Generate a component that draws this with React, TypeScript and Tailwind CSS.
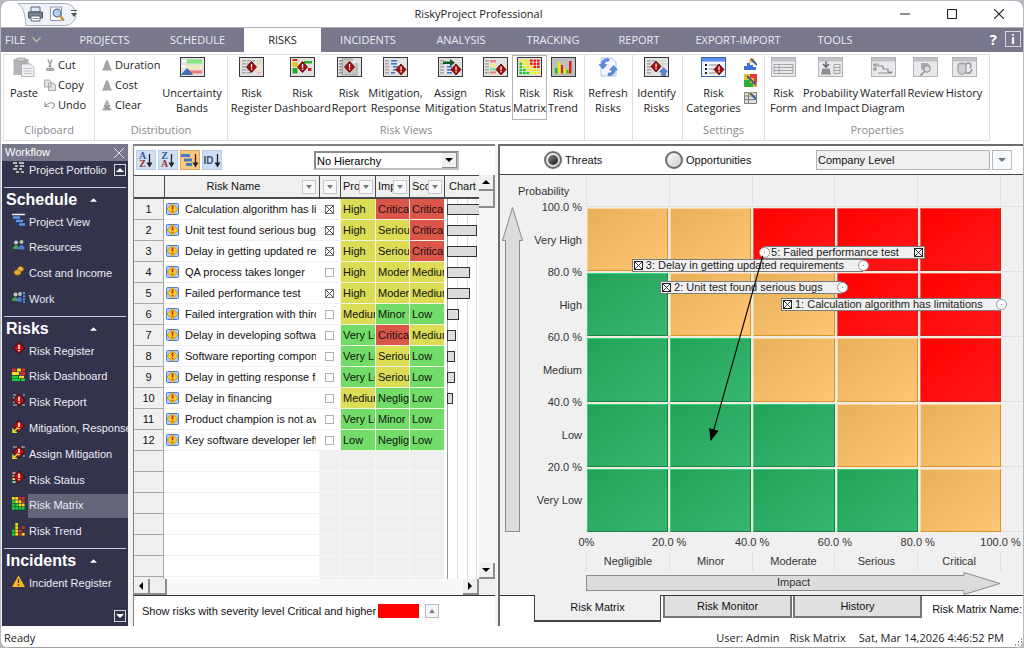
import { useState } from 'react';
import type { ReactNode } from 'react';
import clsx from 'clsx';

const uiFont = "font-['Open_Sans','Noto_Sans',sans-serif]";
const bodyFont = "font-['Liberation_Sans',Arial,sans-serif]";

type Level = 'low' | 'mid' | 'high';

const levelBg: Record<Level, string> = {
    low: 'bg-[#72dc68]',
    mid: 'bg-[#dcdc55]',
    high: 'bg-[#dc5549]',
};

const menuTabs = [
    { label: 'PROJECTS', width: 'w-[93px]' },
    { label: 'SCHEDULE', width: 'w-[93px]' },
    { label: 'RISKS', width: 'w-[77px]' },
    { label: 'INCIDENTS', width: 'w-[94px]' },
    { label: 'ANALYSIS', width: 'w-[92px]' },
    { label: 'TRACKING', width: 'w-[92px]' },
    { label: 'REPORT', width: 'w-[80px]' },
    { label: 'EXPORT-IMPORT', width: 'w-[118px]' },
    { label: 'TOOLS', width: 'w-[76px]' },
];

const risks: { name: string; open: boolean; prob: [string, Level]; impact: [string, Level]; score: [string, Level]; bar: number }[] = [
    { name: 'Calculation algorithm has limitations', open: true, prob: ['High', 'mid'], impact: ['Critical', 'high'], score: ['Critical', 'high'], bar: 36 },
    { name: 'Unit test found serious bugs', open: true, prob: ['High', 'mid'], impact: ['Serious', 'mid'], score: ['Critical', 'high'], bar: 30 },
    { name: 'Delay in getting updated requirements', open: true, prob: ['High', 'mid'], impact: ['Serious', 'mid'], score: ['Critical', 'high'], bar: 30 },
    { name: 'QA process takes longer', open: false, prob: ['High', 'mid'], impact: ['Moderate', 'mid'], score: ['Medium', 'mid'], bar: 23 },
    { name: 'Failed performance test', open: true, prob: ['High', 'mid'], impact: ['Moderate', 'mid'], score: ['Medium', 'mid'], bar: 23 },
    { name: 'Failed intergration with third', open: false, prob: ['Medium', 'mid'], impact: ['Minor', 'low'], score: ['Low', 'low'], bar: 12 },
    { name: 'Delay in developing software', open: false, prob: ['Very Low', 'low'], impact: ['Critical', 'high'], score: ['Medium', 'mid'], bar: 9 },
    { name: 'Software reporting component', open: false, prob: ['Very Low', 'low'], impact: ['Serious', 'mid'], score: ['Low', 'low'], bar: 8 },
    { name: 'Delay in getting response from', open: false, prob: ['Very Low', 'low'], impact: ['Serious', 'mid'], score: ['Low', 'low'], bar: 8 },
    { name: 'Delay in financing', open: false, prob: ['Medium', 'mid'], impact: ['Negligible', 'low'], score: ['Low', 'low'], bar: 6 },
    { name: 'Product champion is not available', open: false, prob: ['Very Low', 'low'], impact: ['Minor', 'low'], score: ['Low', 'low'], bar: 0 },
    { name: 'Key software developer left a', open: false, prob: ['Low', 'low'], impact: ['Negligible', 'low'], score: ['Low', 'low'], bar: 0 },
];

// one string per probability band, top to bottom: g = green, o = orange, r = red
const matrixRows = ['oorrr', 'goorr', 'ggoor', 'gggoo', 'ggggo'];

const matrixBg: Record<string, string> = {
    g: 'bg-linear-to-br from-[#22a258] to-[#37b671] border-t-[#2fd57c] border-l-[#2fd57c] border-r-[#1d7f48] border-b-[#1d7f48]',
    o: 'bg-linear-to-br from-[#e9b05a] to-[#ffc774] border-t-[#f8d7a4] border-l-[#f8d7a4] border-r-[#d6942f] border-b-[#d6942f]',
    r: 'bg-linear-to-br from-[#ff0000] to-[#ff1616] border-t-[#ff5a50] border-l-[#ff5a50] border-r-[#cc2020] border-b-[#cc2020]',
};

const probabilityScale = ['100.0 %', 'Very High', '80.0 %', 'High', '60.0 %', 'Medium', '40.0 %', 'Low', '20.0 %', 'Very Low', ''];
const impactTicks = ['0%', '20.0 %', '40.0 %', '60.0 %', '80.0 %', '100.0 %'];
const impactNames = ['Negligible', 'Minor', 'Moderate', 'Serious', 'Critical'];

const pins = [
    { label: '1: Calculation algorithm has limitations', impact: 100, prob: 70, width: 'w-[220px]', flip: false },
    { label: '2: Unit test found serious bugs', impact: 61.7, prob: 75, width: 'w-[182px]', flip: false },
    { label: '3: Delay in getting updated requirements', impact: 66.7, prob: 82, width: 'w-[231px]', flip: false },
    { label: '5: Failed performance test', impact: 42.9, prob: 86, width: 'w-[161px]', flip: true },
];

/* ---------- icons ---------- */

function Diamond({ x, y }: { x: number; y: number }) {
    return (
        <g transform={`translate(${x} ${y})`}>
            <path d="M0-5.500 5 0 0 5.500-5 0Z" fill="#a80b0b" stroke="#4a0505" strokeWidth="0.8" />
            <rect x="-0.6" y="-3" width="1.3" height="3.8" fill="#fff" />
            <rect x="-0.6" y="1.6" width="1.3" height="1.3" fill="#fff" />
        </g>
    );
}

function Lines({ x, w, fill = '#aaa', ys = [3, 6, 9, 12, 15] }: { x: number; w: number; fill?: string; ys?: number[] }) {
    return <>{ys.map(y => <rect key={y} x={x} y={y} width={w} height="1.6" fill={fill} />)}</>;
}

const ribbonArt: Record<string, ReactNode> = {
    bands: (
        <>
            <path d="M2 4h4M2 9.500h4" stroke="#fff" strokeWidth="2" />
            <rect x="7" y="2.500" width="15" height="4" fill="#7fe77f" />
            <rect x="7" y="8.500" width="15" height="3" fill="#f3efb0" />
            <rect x="7" y="13.500" width="15" height="3" fill="#f07878" />
            <path d="M1.500 17.500 7 11.500 12.500 17.500Z" fill="#3c6fc4" stroke="#24508f" strokeWidth="0.6" />
        </>
    ),
    register: (
        <>
            <Lines x={3} w={4} /><Lines x={8} w={4} /><Lines x={13} w={3} ys={[3]} /><Lines x={18} w={4} fill="#c6e2b2" ys={[3, 6]} />
            <Lines x={18} w={4} fill="#f0e8a0" ys={[9, 12]} /><Lines x={18} w={4} fill="#f2b8b8" ys={[15]} />
            <Diamond x={12.5} y={10} />
        </>
    ),
    dashboard: (
        <>
            <rect x="2.500" y="2" width="5" height="2" fill="#e02020" /><rect x="2.500" y="5" width="5" height="5" fill="#f0c020" />
            <rect x="2.500" y="11" width="5" height="5.500" fill="#28a828" /><rect x="14" y="4" width="8" height="2.500" fill="#28b028" />
            <rect x="18" y="11" width="3.500" height="3" fill="#e02020" />
            <Diamond x={12.5} y={10} />
        </>
    ),
    report: (
        <>
            <path d="M5 2h11l4 4v12H5Z" fill="#c8c8c8" stroke="#888" strokeWidth="0.7" />
            <path d="M16 2v4h4Z" fill="#fff" />
            <Lines x={2} w={4} fill="#999" />
            <Diamond x={12.5} y={10} />
        </>
    ),
    response: (
        <>
            <Lines x={2} w={4} /><Lines x={8} w={6} fill="#4878d0" ys={[3, 6]} /><Lines x={10} w={5} fill="#4878d0" ys={[9, 12]} /><Lines x={8} w={4} fill="#4878d0" ys={[15]} />
            <Diamond x={18} y={12.5} />
        </>
    ),
    assign: (
        <>
            <Lines x={2} w={4} /><Lines x={9} w={5} fill="#4878d0" ys={[9, 12, 15]} />
            <path d="M5 4.500h7V2l5 3.800-5 3.800V7H5Z" fill="#0f5c22" />
            <Diamond x={18} y={12.5} />
        </>
    ),
    status: (
        <>
            <Lines x={2} w={4} /><rect x="7" y="3" width="6" height="2.500" fill="#f08080" /><rect x="7" y="7" width="6" height="2.500" fill="#f2eb8c" />
            <rect x="7" y="11" width="6" height="2.500" fill="#8ce08c" /><rect x="7" y="14.500" width="6" height="2" fill="#f08080" />
            <Diamond x={18} y={12.5} />
        </>
    ),
    matrix: (
        <>
            {['yyyrrr', 'gyyrrr', 'gyyyrr', 'ggyyyy', 'gggyyy'].map((row, r) => row.split('').map((c, i) => (
                <rect key={`${r}${i}`} x={2.5 + i * 3.5} y={2.5 + r * 3.1} width="2.600" height="2.300" fill={c === 'r' ? '#f01010' : c === 'y' ? '#f6ee10' : '#18c828'} />
            )))}
        </>
    ),
    trend: (
        <>
            <rect x="4" y="11" width="2.500" height="5.500" fill="#18b828" /><rect x="7" y="5" width="2.500" height="11.500" fill="#f2e810" />
            <rect x="10" y="8" width="2" height="8.500" fill="#e02020" /><rect x="13" y="12" width="2.500" height="4.500" fill="#f2e810" />
            <rect x="15.500" y="13" width="2" height="3.500" fill="#18b828" /><rect x="18" y="4" width="2.500" height="12.500" fill="#e02020" />
        </>
    ),
    identify: (
        <>
            <Lines x={3} w={4} /><Lines x={8} w={3} ys={[3]} /><Lines x={16} w={5} fill="#c6e2b2" ys={[3, 6]} />
            <Diamond x={12} y={9.5} />
            <path d="M19.500 10.500 23.500 15h-2v3.500h-4V15h-2Z" fill="#5a88dc" stroke="#2f57a8" strokeWidth="0.5" />
        </>
    ),
};

const grayArt: Record<string, ReactNode> = {
    form: <path d="M3 7.500h19v9H3ZM3 10.500h19M3 13.500h19M8 7.500v9" stroke="#a4a4a8" fill="none" />,
    probability: (
        <>
            <path d="M8 4.500v4M5 7l3 3 3-3" stroke="#66666b" strokeWidth="1.600" fill="none" />
            <path d="M4 11.500h8v2l1 4H3l1-4Z" fill="#8d8d92" />
            <path d="M16 7.500h6v9h-6ZM16 10.500h6M16 13.500h6" stroke="#a4a4a8" fill="none" />
        </>
    ),
    waterfall: <path d="M3 7h2v2H3ZM3 11h2v2H3ZM7 6.500V9h5v3h5v3h4.500M7 16h14" stroke="#8d8d92" strokeWidth="1.200" fill="none" />,
    review: (
        <>
            <path d="M8 6h7l3 4-4 6-6-4Z" fill="#a8a8ad" />
            <circle cx="14" cy="12" r="3.200" fill="#dedee2" stroke="#8d8d92" /><path d="m11.500 14.500-4 4" stroke="#8d8d92" strokeWidth="1.600" />
        </>
    ),
    history: (
        <>
            <ellipse cx="10" cy="8" rx="4" ry="2" fill="#b8b8bd" stroke="#909095" /><path d="M6 8v7c0 3 8 3 8 0V8" fill="#cfcfd3" stroke="#909095" />
            <path d="M14 7c4-3 6 1 4 4M20 12c-1 5-5 5-7 3" stroke="#98989d" strokeWidth="1.600" fill="none" />
        </>
    ),
};

function RibbonIcon({ name }: { name: string }) {
    if (name === 'paste') {
        return (
            <svg width="24" height="20" viewBox="0 0 24 20" aria-hidden="true">
                <path d="M1.500 2h15v16h-15Z" fill="#b4b4b8" /><path d="M5 1h8v3H5Z" fill="#d2d2d5" stroke="#9a9a9e" strokeWidth="0.7" />
                <path d="M9.500 7h9l3.500 3.500V19.500h-12.500Z" fill="#f1f1f3" stroke="#a9a9ad" strokeWidth="0.8" />
                <path d="M11.500 11.500h8M11.500 14h8M11.500 16.500h8" stroke="#c0c0c4" />
            </svg>
        );
    }
    if (name === 'refresh') {
        return (
            <svg width="24" height="20" viewBox="0 0 24 20" aria-hidden="true">
                <path d="M5 1h11l4 4v14H5Z" fill="#f5f9ff" stroke="#9db6dc" strokeWidth="0.8" />
                <path d="M13 2C8 1 5 4 5.500 7.500H3l4 4.500 4-4.500H8.500C8.500 5 10 4 13 4Z" fill="#5b8fe0" stroke="#2f62b8" strokeWidth="0.500" />
                <path d="M12 18.500c5 .5 7.500-2.500 7-5.500h2.500l-4-4.500-4 4.500H16c0 2-1 3.300-4 3.300Z" fill="#5b8fe0" stroke="#2f62b8" strokeWidth="0.500" />
            </svg>
        );
    }
    if (name === 'categories' || grayArt[name]) {
        const blue = name === 'categories';
        return (
            <svg width="25" height="20" viewBox="0 0 25 20" aria-hidden="true">
                <rect x="0.500" y="0.500" width="24" height="19" fill={blue ? '#f2f5fb' : '#e9e9ec'} stroke={blue ? '#3c64a8' : '#b4b4b8'} />
                <rect x="1" y="1" width="23" height="3.500" fill={blue ? '#5a8fee' : '#c2c2c6'} />
                {blue ? (
                    <>
                        <path d="M4 7h2v2H4ZM4 11h2v2H4ZM4 15h2v2H4Z" fill="#222" /><path d="M8 8h9M8 12h5M8 16h7" stroke="#888" />
                        <Diamond x={18} y={12.5} />
                    </>
                ) : grayArt[name]}
            </svg>
        );
    }
    return (
        <svg width="25" height="20" viewBox="0 0 25 20" aria-hidden="true">
            <rect x="0.500" y="0.500" width="24" height="19" fill={name === 'trend' ? '#c0c0c0' : '#e2e2e2'} stroke="#3a3a3a" />
            {ribbonArt[name]}
        </svg>
    );
}

function SmallIcon({ name }: { name: string }) {
    const bell = 'M0.500 11.500C3 10.500 4 1 6 1s3 9.500 5.500 10.500Z';
    const art: Record<string, ReactNode> = {
        cut: <path d="M4 0.500 7 8M8 0.500 5 8M3 9.500a1.500 1.500 0 1 0 2.500 0ZM6.500 9.500a1.500 1.500 0 1 0 2.500 0Z" stroke="#9a9a9e" strokeWidth="1.400" fill="none" />,
        copy: <path d="M0.500 1h5l1.500 1.500V8h-6.500ZM4.500 4h5l2 2v5.500h-7Z" fill="#e4e4e7" stroke="#a0a0a4" strokeWidth="0.900" />,
        undo: <path d="M1 3v4.500h4.500M1.500 7C5 2.500 10.500 3 10.500 6c0 2-1 3-3 3.500" fill="none" stroke="#9a9a9e" strokeWidth="1.100" />,
        duration: <path d={bell} fill="#a3a3a8" />,
        cost: <path d={bell} fill="#a3a3a8" />,
        clear: <><path d={bell} fill="#b4b4b8" /><path d="m3.500 6 5 5m0-5-5 5" stroke="#77777c" /></>,
    };
    return <svg width="12" height="12" viewBox="0 0 12 12" className="shrink-0" aria-hidden="true">{art[name]}</svg>;
}

function NavIcon({ name }: { name: string }) {
    const diamond = (
        <g transform="translate(7 6)">
            <path d="M0-6 5.500 0 0 6-5.500 0Z" fill="#c01010" stroke="#000" strokeWidth="0.600" />
            <path d="M0-3.200V1M0 2v1.300" stroke="#fff" strokeWidth="1.500" />
        </g>
    );
    const arrow = <path d="M6 7.500 1.500 12M1 8.500V12.500h4" stroke="#f2e020" strokeWidth="1.500" fill="none" />;
    const squares = (rows: string[]) => rows.map((row, r) => row.split('').map((c, i) => c !== '.' && (
        <rect key={`${r}${i}`} x={i * 3.3} y={r * 3.3} width="2.700" height="2.700" fill={c === 'r' ? '#e02828' : c === 'y' ? '#f2e010' : '#10d828'} />
    )));
    const art: Record<string, ReactNode> = {
        portfolio: <path d="M1 1h4M7 1h5M3 4h3M8 4h4M1 7h4M7 7h3M4 10h3M9 10h3" stroke="#b8b8b8" strokeWidth="1.800" />,
        project: <><path d="M0 1.500h13" stroke="#f0f0f0" strokeWidth="1.600" /><path d="M1 4.500h7M4 8h7M7 11.500h6" stroke="#5a94f0" strokeWidth="2.600" /></>,
        resources: <><circle cx="4" cy="3.500" r="2" fill="#c8c8c8" /><circle cx="9.500" cy="3" r="2" fill="#b0c4a8" /><path d="M1 10c0-5 6-5 6 0Z" fill="#3fa848" /><path d="M6.500 10.500c0-6 6-6 6 0Z" fill="#4a7ce0" /></>,
        cost: <><ellipse cx="8.500" cy="4" rx="3" ry="2.500" fill="#f0b840" stroke="#8a5c10" strokeWidth="0.600" /><ellipse cx="5.500" cy="7.500" rx="3.500" ry="2.700" fill="#e8a828" stroke="#8a5c10" strokeWidth="0.600" /></>,
        work: <><circle cx="3.500" cy="3.500" r="2" fill="#c8c8c8" /><circle cx="8" cy="3" r="2" fill="#b0c4a8" /><path d="M0 10c0-5 6-5 6 0Z" fill="#3fa848" /><path d="M5 10.500c0-6 5-6 5 0Z" fill="#4a7ce0" /><path d="M12 1v11" stroke="#5a94f0" strokeWidth="2" strokeDasharray="2 1.200" /></>,
        register: <>{diamond}</>,
        dashboard: <><path d="M0 2h4" stroke="#e02828" strokeWidth="3" /><path d="M5 2h4" stroke="#f2e010" strokeWidth="3" /><path d="M10 2h3M8 5.500h5" stroke="#e02828" strokeWidth="3" /><path d="M0 5.500h7" stroke="#f2e010" strokeWidth="3" /><path d="M0 9h6M0 12h8M9 12h4" stroke="#10d828" strokeWidth="2.400" /><path d="M7 9h5" stroke="#f2e010" strokeWidth="2.400" /></>,
        report: <><path d="M1 1h3M1 4h2M1 8h2M11 1h2M1 11h4M10 11h3" stroke="#9a9a9a" strokeWidth="1.500" />{diamond}</>,
        mitigation: <>{diamond}{arrow}</>,
        assign: <><path d="M1 1h4M9 1h4M11 10h2" stroke="#9a9a9a" strokeWidth="1.500" />{diamond}{arrow}</>,
        status: <><path d="M0.500 2h3" stroke="#f08080" strokeWidth="2" /><path d="M0.500 5h3M0.500 11h3" stroke="#8ce08c" strokeWidth="2" /><path d="M0.500 8h3" stroke="#f2eb8c" strokeWidth="2" />{diamond}</>,
        matrix: squares(['yyrr', 'gyyr', 'ggyy', 'gggg']),
        trend: squares(['.y..', '.y.r', 'gyr.', 'gyry']),
        incident: <><path d="M6.500 0.500 13 12H0Z" fill="#f6b81c" /><path d="M6.500 4v4M6.500 9.300v1.500" stroke="#4a3606" strokeWidth="1.400" /></>,
    };
    return <svg width="13" height="13" viewBox="0 0 13 13" className="mb-1 shrink-0" aria-hidden="true">{art[name]}</svg>;
}

function Triangle({ dir, className = 'fill-black' }: { dir: 'up' | 'down' | 'left' | 'right'; className?: string }) {
    const d = { up: 'M0 6 4 2l4 4Z', down: 'M0 2l4 4 4-4Z', left: 'M6 0 2 4l4 4Z', right: 'M2 0l4 4-4 4Z' };
    return <svg width="8" height="8" viewBox="0 0 8 8" className={className} aria-hidden="true"><path d={d[dir]} /></svg>;
}

function RiskRowIcon() {
    return (
        <svg width="13" height="12" viewBox="0 0 13 12" className="shrink-0" aria-hidden="true">
            <rect x="0.500" y="0.500" width="12" height="11" rx="1" fill="#b4cbf2" stroke="#4f7cc8" />
            <path d="M6.500 0.500 12 6 6.500 11.500 1 6Z" fill="#f8cc28" stroke="#c08810" strokeWidth="0.700" />
            <path d="M6.500 2.500v4M6.500 7.700v1.600" stroke="#d02010" strokeWidth="1.700" />
        </svg>
    );
}

/* ---------- shared controls ---------- */

function CrossBox({ label, checked, dark }: { label: string; checked: boolean; dark?: boolean }) {
    return (
        <span className="relative block size-[9px] shrink-0">
            <input
                type="checkbox"
                aria-label={label}
                defaultChecked={checked}
                className={clsx('peer block size-[9px] appearance-none border bg-white', dark ? 'border-[#222]' : 'border-[#b0b0b0] checked:border-[#777]')}
            />
            <svg viewBox="0 0 9 9" className="pointer-events-none absolute inset-0 hidden peer-checked:block" aria-hidden="true">
                <path d="m1 1 7 7m0-7-7 7" stroke={dark ? '#222' : '#333'} strokeWidth="0.900" />
            </svg>
        </span>
    );
}

function ScrollButton({ dir, label }: { dir: 'up' | 'down' | 'left' | 'right'; label: string }) {
    return (
        <button aria-label={label} className="flex size-4 shrink-0 items-center justify-center border-r-2 border-b-2 border-[#8c8c8c] bg-[#f0f0f0]">
            <Triangle dir={dir} />
        </button>
    );
}

/* ---------- window chrome ---------- */

function TitleBar() {
    return (
        <header className="flex h-[26px] shrink-0 items-center">
            <div className="relative ml-4 flex h-full w-16 items-center gap-[6px] pl-[10px]">
                <svg width="60" height="23" viewBox="0 0 60 23" className="absolute top-[2px] left-0" aria-hidden="true">
                    <path d="M1 0.500h47a11 11 0 0 1 0 22H9C8 12 7 5 1 0.500Z" fill="#eff2f8" stroke="#a9afbb" />
                </svg>
                <button aria-label="Print" className="relative">
                    <svg width="17" height="16" viewBox="0 0 17 16" aria-hidden="true">
                        <path d="M4 1h9v5H4Z" fill="#dfe8f5" stroke="#5a6478" /><path d="M1.500 6h14v6h-14Z" fill="#7c8290" stroke="#4a4f5c" />
                        <path d="M4 10h9v5H4Z" fill="#fff" stroke="#5a6478" /><path d="M5.500 12.500h6" stroke="#88a" />
                    </svg>
                </button>
                <button aria-label="Print preview" className="relative">
                    <svg width="15" height="16" viewBox="0 0 15 16" aria-hidden="true">
                        <path d="M0.500 1h11v13.500H.5Z" fill="#fff" stroke="#8a98b0" />
                        <circle cx="7" cy="7" r="3.800" fill="#b4d2f2" stroke="#5a7090" strokeWidth="1.200" /><path d="m10 10 4 4.500" stroke="#d08a28" strokeWidth="2.200" />
                    </svg>
                </button>
                <button aria-label="Customize toolbar" className="absolute top-[9px] right-1">
                    <svg width="6" height="8" viewBox="0 0 6 8" aria-hidden="true"><path d="M0 .5h6" stroke="#555" /><path d="M0 3h6L3 7Z" fill="#555" /></svg>
                </button>
            </div>
            <h1 className="flex-1 text-center text-[11px] text-[#222]">RiskyProject Professional</h1>
            <div className="flex h-full w-[147px] items-center justify-end gap-[37px] pr-[19px] text-[#222]">
                <button aria-label="Minimize"><svg width="10" height="10" viewBox="0 0 10 10"><path d="M0 5h10" stroke="currentColor" /></svg></button>
                <button aria-label="Maximize"><svg width="10" height="10" viewBox="0 0 10 10"><rect x="0.500" y="0.500" width="9" height="9" rx="1" fill="none" stroke="currentColor" strokeWidth="1.200" /></svg></button>
                <button aria-label="Close"><svg width="10" height="10" viewBox="0 0 10 10"><path d="m0 0 10 10M10 0 0 10" stroke="currentColor" strokeWidth="1.200" /></svg></button>
            </div>
        </header>
    );
}

function MenuBar() {
    const [active, setActive] = useState('RISKS');
    return (
        <nav className="flex h-6 shrink-0 items-stretch bg-[#78778b] text-[11px] text-[#ececf2]">
            <button className="flex w-[57px] items-center gap-[6px] pl-1">
                FILE
                <svg width="9" height="6" viewBox="0 0 9 6" aria-hidden="true"><path d="m.5.5 4 4 4-4" fill="none" stroke="#b9c3a6" strokeWidth="1.400" /></svg>
            </button>
            {menuTabs.map(tab => (
                <button
                    key={tab.label}
                    onClick={() => setActive(tab.label)}
                    className={clsx('text-center whitespace-nowrap', tab.width, active === tab.label && 'bg-white text-[#222]')}
                >
                    {tab.label}
                </button>
            ))}
            <div className="ml-auto flex items-center gap-2 pr-[2px] pb-[2px] font-bold text-white">
                <button aria-label="Help" className="text-[15px] leading-none">?</button>
                <button aria-label="About" className="size-4 border border-[#d6d6de] text-[13px] leading-[13px]">i</button>
            </div>
        </nav>
    );
}

function RibbonButton({ icon, lines, width, active }: { icon: string; lines: string[]; width: string; active?: boolean }) {
    return (
        <button
            className={clsx(
                'flex h-[65px] shrink-0 flex-col items-center border pt-px text-[11px] leading-[15px] whitespace-nowrap text-[#222]',
                width,
                active ? 'border-[#b4b4b4]' : 'border-transparent',
            )}
        >
            <span className="mb-2 block h-5"><RibbonIcon name={icon} /></span>
            {lines.map(line => <span key={line}>{line}</span>)}
        </button>
    );
}

function SmallButton({ icon, label }: { icon: string; label: string }) {
    return (
        <button className="flex h-5 items-center gap-[2px] text-[11px] text-[#222]">
            <SmallIcon name={icon} />
            {label}
        </button>
    );
}

function RibbonGroup({ title, children, width }: { title?: string; children: ReactNode; width: string }) {
    return (
        <section className={clsx('flex shrink-0 flex-col border-r border-[#e0e0e2]', width)}>
            <div className="flex flex-1">{children}</div>
            <h2 className="h-[18px] text-center text-[11px] leading-4 text-[#8a8a8e]">{title}</h2>
        </section>
    );
}

function Ribbon() {
    return (
        <div className="h-[92px] shrink-0 overflow-hidden pt-[2px] pl-[2px]">
            <div className="flex h-[87px] w-max border-y border-l border-[#e0e0e2]">
                <RibbonGroup title="Clipboard" width="w-[91px]">
                    <RibbonButton icon="paste" lines={['Paste']} width="w-[40px]" />
                    <div className="flex flex-col">
                        <SmallButton icon="cut" label="Cut" />
                        <SmallButton icon="copy" label="Copy" />
                        <SmallButton icon="undo" label="Undo" />
                    </div>
                </RibbonGroup>
                <RibbonGroup title="Distribution" width="w-[133px]">
                    <div className="flex w-[62px] flex-col pl-[6px]">
                        <SmallButton icon="duration" label="Duration" />
                        <SmallButton icon="cost" label="Cost" />
                        <SmallButton icon="clear" label="Clear" />
                    </div>
                    <RibbonButton icon="bands" lines={['Uncertainty', 'Bands']} width="w-[70px]" />
                </RibbonGroup>
                <RibbonGroup title="Risk Views" width="w-[357px]">
                    <RibbonButton icon="register" lines={['Risk', 'Register']} width="w-[47px]" />
                    <RibbonButton icon="dashboard" lines={['Risk', 'Dashboard']} width="w-[55px]" />
                    <RibbonButton icon="report" lines={['Risk', 'Report']} width="w-[38px]" />
                    <RibbonButton icon="response" lines={['Mitigation,', 'Response']} width="w-[55px]" />
                    <RibbonButton icon="assign" lines={['Assign', 'Mitigation']} width="w-[55px]" />
                    <RibbonButton icon="status" lines={['Risk', 'Status']} width="w-[34px]" />
                    <RibbonButton icon="matrix" lines={['Risk', 'Matrix']} width="w-[35px]" active />
                    <RibbonButton icon="trend" lines={['Risk', 'Trend']} width="w-[32px]" />
                </RibbonGroup>
                <RibbonGroup width="w-[48px]">
                    <RibbonButton icon="refresh" lines={['Refresh', 'Risks']} width="w-[46px]" />
                </RibbonGroup>
                <RibbonGroup width="w-[50px]">
                    <RibbonButton icon="identify" lines={['Identify', 'Risks']} width="w-[47px]" />
                </RibbonGroup>
                <RibbonGroup title="Settings" width="w-[82px]">
                    <RibbonButton icon="categories" lines={['Risk', 'Categories']} width="w-[61px]" />
                    <div className="flex flex-col gap-1 pt-[2px]">
                        <button aria-label="Chart settings">
                            <svg width="13" height="13" viewBox="0 0 13 13"><path d="M0 9h3v4H0ZM3 6h3v7H3ZM6 8h3v5H6ZM9 10h3v3H9Z" fill="#3c72d8" /><circle cx="8" cy="3.500" r="2.800" fill="#f2c84a" /><path d="m7 2 6 6" stroke="#3858a0" strokeWidth="1.800" /></svg>
                        </button>
                        <button aria-label="Matrix settings">
                            <svg width="13" height="13" viewBox="0 0 13 13"><path d="M0 0h13v13H0Z" fill="#e8c030" /><path d="M0 6h6v7H0ZM6 9h3v4H6Z" fill="#2fae3c" /><path d="M6 0h7v9h-3V4H6Z" fill="#e04030" /><path d="m3 2 9 9" stroke="#3858a0" strokeWidth="1.800" /></svg>
                        </button>
                        <button aria-label="Table settings">
                            <svg width="13" height="13" viewBox="0 0 13 13"><path d="M.5 1.500h12v11H.5ZM.5 5h12M.5 8.500h12M4.500 1.500v11" fill="#dcdcdc" stroke="#808080" /><circle cx="7" cy="3" r="2.400" fill="#f2c84a" /><path d="m6 2 6 6" stroke="#3858a0" strokeWidth="1.800" /></svg>
                        </button>
                    </div>
                </RibbonGroup>
                <RibbonGroup title="Properties" width="w-[225px]">
                    <RibbonButton icon="form" lines={['Risk', 'Form']} width="w-[37px]" />
                    <RibbonButton icon="probability" lines={['Probability', 'and Impact']} width="w-[57px]" />
                    <RibbonButton icon="waterfall" lines={['Waterfall', 'Diagram']} width="w-[48px]" />
                    <RibbonButton icon="review" lines={['Review']} width="w-[37px]" />
                    <RibbonButton icon="history" lines={['History']} width="w-[40px]" />
                </RibbonGroup>
            </div>
        </div>
    );
}

/* ---------- workflow pane ---------- */

function NavHeading({ label }: { label: string }) {
    return (
        <h3 className="mx-[2px] mt-1 flex h-[22px] shrink-0 items-center border-t border-[#c9c9d6] pt-[2px] pl-[2px] text-[16px] leading-5 font-bold text-white">
            <span className="w-[84px]">{label}</span>
            <Triangle dir="up" className="w-[7px] fill-white" />
        </h3>
    );
}

function NavItem({ icon, label }: { icon: string; label: string }) {
    const active = label === 'Risk Matrix';
    return (
        <a href="#" className="flex min-h-0 flex-1 items-center pl-[10px] text-[11px] text-[#ececf4]">
            <NavIcon name={icon} />
            <span className={clsx('ml-[3px] flex h-6 flex-1 items-center pl-px whitespace-nowrap', active && 'bg-[#65657a]')}>{label}</span>
        </a>
    );
}

function WorkflowPane() {
    return (
        <aside className={clsx('ml-px flex w-[126px] shrink-0 flex-col overflow-hidden bg-[#33334b]', bodyFont)}>
            <div className="flex h-[17px] shrink-0 items-center justify-between bg-[#78778b] pr-1 pl-[3px] text-[11px] text-white">
                Workflow
                <button aria-label="Close workflow"><svg width="10" height="10" viewBox="0 0 10 10"><path d="m0 0 10 10M10 0 0 10" stroke="#e6e6ee" /></svg></button>
            </div>
            <div className="flex h-[22px] shrink-0 pr-[2px]">
                <div className="flex h-[19px] flex-1"><NavItem icon="portfolio" label="Project Portfolio" /></div>
                <button aria-label="Scroll workflow up" className="mt-[3px] flex size-3 items-center justify-center border border-[#d6d6e0] bg-[#33334b]">
                    <Triangle dir="up" className="fill-white" />
                </button>
            </div>
            <nav className="flex min-h-0 flex-1 flex-col">
                <NavHeading label="Schedule" />
                <NavItem icon="project" label="Project View" />
                <NavItem icon="resources" label="Resources" />
                <NavItem icon="cost" label="Cost and Income" />
                <NavItem icon="work" label="Work" />
                <NavHeading label="Risks" />
                <NavItem icon="register" label="Risk Register" />
                <NavItem icon="dashboard" label="Risk Dashboard" />
                <NavItem icon="report" label="Risk Report" />
                <NavItem icon="mitigation" label="Mitigation, Response" />
                <NavItem icon="assign" label="Assign Mitigation" />
                <NavItem icon="status" label="Risk Status" />
                <NavItem icon="matrix" label="Risk Matrix" />
                <NavItem icon="trend" label="Risk Trend" />
                <NavHeading label="Incidents" />
                <NavItem icon="incident" label="Incident Register" />
            </nav>
            <div className="flex h-[30px] shrink-0 items-end justify-end pr-[2px] pb-1">
                <button aria-label="Scroll workflow down" className="flex size-3 items-center justify-center border border-[#d6d6e0] bg-[#33334b]">
                    <Triangle dir="down" className="fill-white" />
                </button>
            </div>
        </aside>
    );
}

/* ---------- risk table ---------- */

function SortIcon({ top, bottom }: { top: string; bottom: string }) {
    return (
        <span className="flex items-center">
            <span className="flex flex-col font-['Liberation_Serif',serif] text-[10px] leading-[8px] font-bold">
                <span className="text-[#35589c]">{top}</span>
                <span className="text-[#a03030]">{bottom}</span>
            </span>
            <SortArrow />
        </span>
    );
}

function SortArrow() {
    return <svg width="7" height="15" viewBox="0 0 7 15" aria-hidden="true"><path d="M3.500 1v11" stroke="#222" strokeWidth="1.300" /><path d="M.5 9.500h6l-3 5Z" fill="#222" /></svg>;
}

function FilterButton({ label }: { label: string }) {
    return (
        <button aria-label={label} className="flex size-[14px] shrink-0 items-center justify-center border border-[#c4c8cc] bg-[#f8f9fa]">
            <svg width="6" height="4" viewBox="0 0 6 4"><path d="M0 0h6L3 4Z" fill="#7c7c7c" /></svg>
        </button>
    );
}

const headCell = 'overflow-hidden border-t border-b-2 border-l border-[#4a4a4a] p-0 font-normal';
const gridLines = 'absolute inset-y-0 left-[3px] flex w-[30px] justify-between border-l border-[#9a9a9a]';

function ChartCell({ bar }: { bar: number }) {
    return (
        <td className="relative h-[21px] overflow-hidden bg-white p-0">
            <div className={gridLines}>
                <i className="ml-[9px] w-px bg-[#dcdcdc]" />
                <i className="w-px bg-[#dcdcdc]" />
                <i className="w-px bg-[#dcdcdc]" />
            </div>
            {bar > 0 && <div className="relative ml-[3px] h-[11px] border border-[#333] bg-[#dcdcdc]" style={{ width: bar }} />}
        </td>
    );
}

function RiskTable() {
    return (
        <table className="w-full table-fixed border-separate border-spacing-0 text-[11px] text-[#111]">
            <colgroup>
                <col className="w-[30px]" />
                <col />
                <col className="w-[21px]" />
                <col className="w-[35px]" />
                <col className="w-[34px]" />
                <col className="w-[35px]" />
                <col className="w-[35px]" />
            </colgroup>
            <thead className="bg-[#f0f0f0]">
                <tr className="h-6">
                    <th className={clsx(headCell, 'border-l-0')} aria-label="Number" />
                    <th className={headCell}>
                        <div className="flex items-center pr-[3px]"><span className="flex-1 text-center">Risk Name</span><FilterButton label="Filter risk name" /></div>
                    </th>
                    <th className={headCell}><div className="flex justify-center"><FilterButton label="Filter opened" /></div></th>
                    {['Probability', 'Impact', 'Score'].map(h => (
                        <th key={h} className={headCell}>
                            <div className="flex items-center justify-between pr-[2px] pl-[2px]">
                                <span className="min-w-0 overflow-hidden">{h}</span>
                                <FilterButton label={`Filter ${h}`} />
                            </div>
                        </th>
                    ))}
                    <th className={clsx(headCell, 'pl-1 text-left')}>Chart</th>
                </tr>
            </thead>
            <tbody>
                {risks.map((risk, i) => (
                    <tr key={risk.name} className="h-[21px]">
                        <td className="border-r border-b border-[#a8a8a8] bg-[#f0f0f0] p-0 text-center">{i + 1}</td>
                        <td className="border-b border-[#f2f2f2] bg-white p-0">
                            <div className="flex items-center pr-[3px] pl-[2px]">
                                <RiskRowIcon />
                                <span className="ml-[6px] min-w-0 flex-1 overflow-hidden whitespace-nowrap">{risk.name}</span>
                            </div>
                        </td>
                        <td className="border-b border-[#f2f2f2] bg-white p-0">
                            <div className="flex justify-center"><CrossBox label={`${risk.name} opened`} checked={risk.open} /></div>
                        </td>
                        {[risk.prob, risk.impact, risk.score].map(([text, level], n) => (
                            <td key={n} className={clsx('overflow-hidden border-b border-l border-[#f4f4e4] p-0 pl-[2px] whitespace-nowrap', levelBg[level])}>
                                <div className="overflow-hidden">{text}</div>
                            </td>
                        ))}
                        <ChartCell bar={risk.bar} />
                    </tr>
                ))}
                {Array.from({ length: 30 }, (_, i) => (
                    <tr key={i} className="h-[21px]">
                        <td className="border-r border-b border-[#a8a8a8] bg-[#f0f0f0] p-0" />
                        <td className="border-b border-[#f2f2f2] bg-white p-0" />
                        {[0, 1, 2, 3].map(n => <td key={n} className="border-b border-l border-[#f6f6f6] bg-[#f0f0f0] p-0" />)}
                        <ChartCell bar={0} />
                    </tr>
                ))}
            </tbody>
        </table>
    );
}

function TablePane() {
    const sortButton = 'flex size-5 items-center justify-center border border-[#b9cde6] bg-[#cfe0f4]';
    return (
        <section className={clsx('flex w-[362px] shrink-0 flex-col overflow-hidden border-t-2 border-l border-[#808080] bg-white', bodyFont)}>
            <div className="flex h-[29px] shrink-0 items-center gap-[2px] pb-px pl-[2px]">
                <button aria-label="Sort ascending" className={sortButton}><SortIcon top="A" bottom="Z" /></button>
                <button aria-label="Sort descending" className={sortButton}><SortIcon top="Z" bottom="A" /></button>
                <button aria-label="Sort by hierarchy" className="flex size-5 items-center justify-center border border-[#e0a860] bg-[#fbc880]">
                    <svg width="11" height="14" viewBox="0 0 11 14" aria-hidden="true"><path d="M0 1h9v3H0ZM3 5.500h8v3H3ZM5 10h6v3H5Z" fill="#4a78c8" /></svg>
                    <SortArrow />
                </button>
                <button aria-label="Sort by ID" className={clsx(sortButton, 'text-[10px] font-bold text-[#35506c]')}>ID<SortArrow /></button>
                <div className="relative ml-auto mr-[36px] h-[19px] w-[145px]">
                    <select aria-label="Hierarchy" className="block h-full w-full appearance-none border-2 border-[#8a8a8a] border-r-[#c0c0c0] border-b-[#c0c0c0] bg-white pl-px text-[11px] text-black">
                        <option>No Hierarchy</option>
                    </select>
                    <span className="pointer-events-none absolute inset-y-[2px] right-[2px] flex w-[15px] items-center justify-center border-r border-b border-[#8c8c8c] bg-[#f0f0f0]">
                        <Triangle dir="down" />
                    </span>
                </div>
            </div>
            <div className="flex min-h-0 flex-1">
                <div className="min-w-0 flex-1 overflow-hidden"><RiskTable /></div>
                <div className="flex w-4 shrink-0 flex-col bg-[#f8f8f8]">
                    <ScrollButton dir="up" label="Scroll up" />
                    <div className="h-[17px] border-r-2 border-b-2 border-[#8c8c8c] bg-[#f0f0f0]" />
                    <div className="flex-1" />
                    <ScrollButton dir="down" label="Scroll down" />
                </div>
            </div>
            <div className="flex h-4 shrink-0 bg-[#f8f8f8]">
                <ScrollButton dir="left" label="Scroll left" />
                <div className="w-[17px] border-r-2 border-b-2 border-[#8c8c8c] bg-[#f0f0f0]" />
                <div className="flex-1" />
                <ScrollButton dir="right" label="Scroll right" />
                <div className="w-4 bg-[#f0f0f0]" />
            </div>
            <div className="flex h-[31px] shrink-0 items-center border-t border-[#333] pl-2 text-[11px] text-[#111]">
                Show risks with severity level Critical and higher
                <span className="ml-[2px] h-[14px] w-[41px] bg-[#ff0000]" />
                <button aria-label="Change severity level" className="ml-[6px] flex size-[14px] items-center justify-center border border-[#b4bac4] bg-[#f6f7fa]">
                    <svg width="6" height="4" viewBox="0 0 6 4"><path d="M0 4h6L3 0Z" fill="#7c7c7c" /></svg>
                </button>
            </div>
        </section>
    );
}

/* ---------- risk matrix ---------- */

function ThreatToggle() {
    const [mode, setMode] = useState('Threats');
    return (
        <>
            {['Threats', 'Opportunities'].map(option => (
                <label key={option} className="flex w-[121px] items-center gap-[3px] text-[11px]">
                    <span className="relative size-[18px]">
                        <input
                            type="radio"
                            name="mode"
                            checked={mode === option}
                            onChange={() => setMode(option)}
                            className="peer block size-[18px] appearance-none rounded-full border-2 border-[#6e6e6e] bg-linear-to-br from-[#fafafa] to-[#cfcfcf]"
                        />
                        <span className="pointer-events-none absolute inset-[4px] hidden rounded-full bg-linear-to-br from-[#8a8a8a] to-[#1c1c1c] peer-checked:block" />
                    </span>
                    {option}
                </label>
            ))}
        </>
    );
}

function Pin({ pin }: { pin: (typeof pins)[number] }) {
    return (
        <div className="absolute size-0" style={{ left: `${pin.impact}%`, top: `${100 - pin.prob}%` }}>
            <div
                className={clsx(
                    'absolute -top-[7px] flex h-[13px] items-center border border-[#7c7c7c] bg-[#f0f0f0] text-[11px] leading-[11px] whitespace-nowrap text-[#222]',
                    pin.width,
                    pin.flip ? 'left-0 justify-between pr-px pl-[6px]' : 'right-0 gap-[3px] pl-px',
                )}
            >
                {!pin.flip && <CrossBox label={pin.label} checked dark />}
                <span>{pin.label}</span>
                {pin.flip && <CrossBox label={pin.label} checked dark />}
            </div>
            <span className="absolute -top-[6px] -left-[5px] flex size-[11px] items-center justify-center rounded-full border border-[#999] bg-white">
                <i className="size-px bg-[#888]" />
            </span>
        </div>
    );
}

function RiskMatrix() {
    return (
        <div className="flex min-h-0 flex-1 overflow-hidden bg-[#f0f0f0] text-[11px] text-[#333]">
            {/* probability axis */}
            <div className="flex w-[86px] shrink-0 flex-col">
                <div className="flex h-8 shrink-0 items-center pl-[18px]">Probability</div>
                <div className="flex min-h-0 flex-1">
                    <div className="ml-[2px] flex w-[21px] flex-col">
                        <svg width="21" height="34" viewBox="0 0 21 34" className="relative z-10 -mb-px" aria-hidden="true">
                            <path d="M3.500 33.500H.5L10.500.5l10 33h-3" fill="#dcdcdc" stroke="#8c8c8c" />
                        </svg>
                        <div className="mx-[3px] flex-1 border border-t-0 border-[#8c8c8c] bg-[#dcdcdc]" />
                    </div>
                    <ul className="-my-2 flex flex-1 flex-col justify-between pr-1 text-right leading-4 whitespace-nowrap">
                        {probabilityScale.map((label, i) => <li key={i} className="h-4">{label}</li>)}
                    </ul>
                </div>
                <div className="h-[63px] shrink-0" />
            </div>

            <div className="flex min-w-0 flex-1 flex-col">
                <div className="grid h-8 shrink-0 grid-cols-5 border-r border-b border-[#e0e0e0]">
                    {impactNames.map(name => <i key={name} className="border-l border-[#e0e0e0]" />)}
                </div>
                <div className="relative min-h-0 flex-1">
                    <div className="grid h-full grid-cols-5 grid-rows-5 gap-[2px] bg-[#f0ecdf] pt-px pl-px">
                        {matrixRows.map((row, r) => row.split('').map((c, i) => (
                            <div key={`${r}${i}`} className={clsx('border', matrixBg[c])} />
                        )))}
                    </div>
                    {pins.map(pin => <Pin key={pin.label} pin={pin} />)}
                    <svg className="pointer-events-none absolute inset-0 h-full w-full" aria-hidden="true">
                        <defs>
                            <marker id="head" viewBox="0 0 12 10" refX="11" refY="5" markerWidth="12" markerHeight="10" markerUnits="userSpaceOnUse" orient="auto">
                                <path d="M0 0 12 5 0 10Z" />
                            </marker>
                        </defs>
                        <line x1="42.600%" y1="15%" x2="30.100%" y2="71.700%" stroke="#000" strokeWidth="1.100" markerEnd="url(#head)" />
                    </svg>
                </div>
                <ul className="-mx-[41px] flex h-5 shrink-0 items-center text-center">
                    {impactTicks.map(tick => <li key={tick} className="flex-1">{tick}</li>)}
                </ul>
                <div className="grid h-[19px] shrink-0 grid-cols-5 border-r border-[#e0e0e0] text-center leading-[18px]">
                    {impactNames.map(name => <span key={name} className="border-l border-[#e0e0e0]">{name}</span>)}
                </div>
                <div className="flex h-6 shrink-0 items-center">
                    <div className="h-4 flex-1 border border-r-0 border-[#8c8c8c] bg-[#dcdcdc] pl-9 text-center leading-[13px]">Impact</div>
                    <svg width="38" height="23" viewBox="0 0 38 23" className="-ml-px" aria-hidden="true">
                        <path d="M1 3.500V.5L37 11.500 1 22.500V19.500" fill="#dcdcdc" stroke="#8c8c8c" />
                    </svg>
                </div>
            </div>
            <div className="flex w-[22px] shrink-0 flex-col">
                <div className="h-8 shrink-0 border-b border-[#e0e0e0]" />
                <div className="grid min-h-0 flex-1 grid-rows-5">
                    {matrixRows.map(row => <i key={row} className="border-b border-[#e0e0e0]" />)}
                </div>
                <div className="h-[63px] shrink-0" />
            </div>
        </div>
    );
}

function MatrixPane() {
    return (
        <section className={clsx('flex min-w-0 flex-1 flex-col overflow-hidden border-t-2 border-l-2 border-[#6c6c6c] bg-white', bodyFont)}>
            <div className="flex h-[29px] shrink-0 items-center border-b border-[#444] pl-[44px] text-[#111]">
                <ThreatToggle />
                <select aria-label="Level" className="ml-auto h-5 w-[174px] appearance-none border border-[#b0b4ba] bg-[#f0f0f0] pl-px text-[11px]">
                    <option>Company Level</option>
                </select>
                <button aria-label="Open level list" className="ml-[2px] mr-[11px] flex h-5 w-5 items-center justify-center border border-[#b4bac4] bg-[#f8f9fa]">
                    <Triangle dir="down" className="fill-[#777]" />
                </button>
            </div>
            <RiskMatrix />
            <div className="flex h-[31px] shrink-0 items-start text-[11px] text-[#111]">
                <div className="h-px w-[34px] bg-[#333]" />
                <button className="h-[27px] w-[127px] border border-t-0 border-b-2 border-[#444] bg-[#f0f0f0]">Risk Matrix</button>
                <div className="flex flex-1 items-start border-t border-[#333] pl-[2px]">
                    <button className="h-[22px] w-[129px] border-2 border-t-0 border-[#777] bg-[#e0e0e0]">Risk Monitor</button>
                    <button className="ml-px h-[22px] w-[129px] border-2 border-t-0 border-[#777] bg-[#e0e0e0]">History</button>
                    <span className="ml-auto pt-[5px] pr-px whitespace-nowrap">Risk Matrix Name:</span>
                </div>
            </div>
        </section>
    );
}

function StatusBar() {
    return (
        <footer className="relative flex h-[22px] shrink-0 items-center border-b border-[#a0a0a0] pt-[3px] pr-[19px] pl-[3px] text-[11px] text-[#222]">
            <span>Ready</span>
            <span className="ml-auto">User: Admin</span>
            <span className="ml-[10px]">Risk Matrix</span>
            <span className="ml-[13px]">Sat, Mar 14,2026 4:46:52 PM</span>
            <svg width="9" height="9" viewBox="0 0 9 9" className="absolute right-0 bottom-0" aria-hidden="true">
                <path d="M7 1h1M7 4h1M7 7h1M4 4h1M4 7h1M1 7h1" stroke="#777" strokeWidth="1.500" />
            </svg>
        </footer>
    );
}

export default function App() {
    return (
        <div className={clsx('h-screen overflow-hidden bg-[#b4bac0] px-px pt-px', uiFont)}>
            <div className="flex h-full flex-col overflow-hidden rounded-t-lg rounded-b-lg bg-white">
                <TitleBar />
                <div className="h-px shrink-0 bg-[#b0b0ba]" />
                <MenuBar />
                <Ribbon />
                <main className="flex min-h-0 flex-1 bg-[#f4f4f4]">
                    <WorkflowPane />
                    <div className="w-[5px] shrink-0" />
                    <TablePane />
                    <div className="w-[3px] shrink-0" />
                    <MatrixPane />
                </main>
                <StatusBar />
            </div>
        </div>
    );
}
